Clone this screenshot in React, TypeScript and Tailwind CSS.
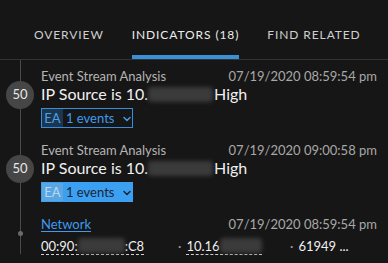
import { ChevronDown } from 'lucide-react'

const TABS = ['Overview', 'Indicators (18)', 'Find Related'] as const

function Blur({ w }: { w: number }) {
  return (
    <span
      className="inline-block h-[15px] align-[-2px] bg-[#3b3b3b] blur-[2px] rounded-sm"
      style={{ width: w }}
    />
  )
}

function Chip({ filled }: { filled?: boolean }) {
  return (
    <div
      className={`mt-1 flex h-5 w-[92px] items-stretch border text-[13px] leading-4 whitespace-nowrap ${
        filled ? 'bg-[#3b9ff2] border-[#3b9ff2]' : 'border-[#3a8ddb]'
      }`}
    >
      <span
        className={`flex w-[21px] shrink-0 items-center justify-center ${
          filled ? 'bg-[#5aa6e2] text-[#b9d8f3]' : 'bg-[#1c3650] text-[#4aa0ea]'
        }`}
      >
        EA
      </span>
      <span className={`flex items-center pl-[3px] ${filled ? 'text-[#1b2530]' : 'text-[#3d9bf0]'}`}>
        1 events
        <ChevronDown size={12} strokeWidth={3} className="ml-[7px] mt-[2px] shrink-0" />
      </span>
    </div>
  )
}

function EventItem({ time, filled }: { time: string; filled?: boolean }) {
  return (
    <div className="flex">
      <div className="flex w-[40px] shrink-0 justify-center">
        <div className="mt-[13px] flex h-[28px] w-[28px] shrink-0 items-center justify-center rounded-full bg-[#464646] text-[13px] text-[#e8e8e8]">
          50
        </div>
      </div>
      <div className="ml-px flex-1">
        <div className="flex h-4 items-center justify-between text-[13px] leading-4">
          <span className="text-[#b4b4b4]">Event Stream Analysis</span>
          <span className="text-[#a8a8a8]">{time}</span>
        </div>
        <div className="h-5 text-[16px] leading-5 text-[#f0f0f0]">
          IP Source is 10.
          <Blur w={65} />
          <span className="ml-px">High</span>
        </div>
        <Chip filled={filled} />
      </div>
    </div>
  )
}

export default function App() {
  return (
    <div className="h-[263px] w-[388px] overflow-hidden bg-[#161616] font-['Lato',sans-serif]">
      {/* tabs */}
      <div className="flex h-[60px] items-end gap-[28px] border-b border-[#333] pl-[34px]">
        {TABS.map((t, i) => (
          <div
            key={t}
            className={`pb-[11px] text-[12px] uppercase tracking-[0.9px] border-b-4 ${
              i === 1 ? 'border-[#3a8fd9] text-[#ececec]' : 'border-transparent text-[#cfcfcf]'
            }`}
          >
            {t}
          </div>
        ))}
      </div>

      {/* timeline */}
      <div className="relative flex flex-col gap-[14px] pr-[11px] pt-2">
        <div className="absolute left-[20px] top-0 bottom-0 w-px bg-[#4a4a4a]" />
        <div className="relative">
          <EventItem time="07/19/2020 08:59:54 pm" />
        </div>
        <div className="relative">
          <EventItem time="07/19/2020 09:00:58 pm" filled />
        </div>
        <div className="relative flex">
          <div className="flex w-[40px] shrink-0 justify-center">
            <div className="mt-[15px] h-[5px] w-[5px] rounded-full bg-[#6a6a6a]" />
          </div>
          <div className="ml-px flex-1">
            <div className="flex h-4 items-center justify-between text-[13px] leading-4">
              <span className="text-[#3d9bf0] underline underline-offset-2">Network</span>
              <span className="text-[#a8a8a8]">07/19/2020 08:59:54 pm</span>
            </div>
            <div className="mt-[6px] flex whitespace-nowrap text-[13px] leading-4 text-[#f0f0f0]">
              <span className="w-[137px] shrink-0">
                <span className="border-b border-dashed border-[#cfcfcf]">
                  00:90:
                  <Blur w={47} />
                  :C8
                </span>
              </span>
              <span className="w-[112px] shrink-0">
                <span className="mr-[5px] text-[#9a9a9a]">·</span>
                <span className="border-b border-dashed border-[#cfcfcf]">
                  10.16
                  <Blur w={42} />
                </span>
              </span>
              <span>
                <span className="mr-[5px] text-[#9a9a9a]">·</span>
                61949 ...
              </span>
            </div>
          </div>
        </div>
      </div>
    </div>
  )
}
